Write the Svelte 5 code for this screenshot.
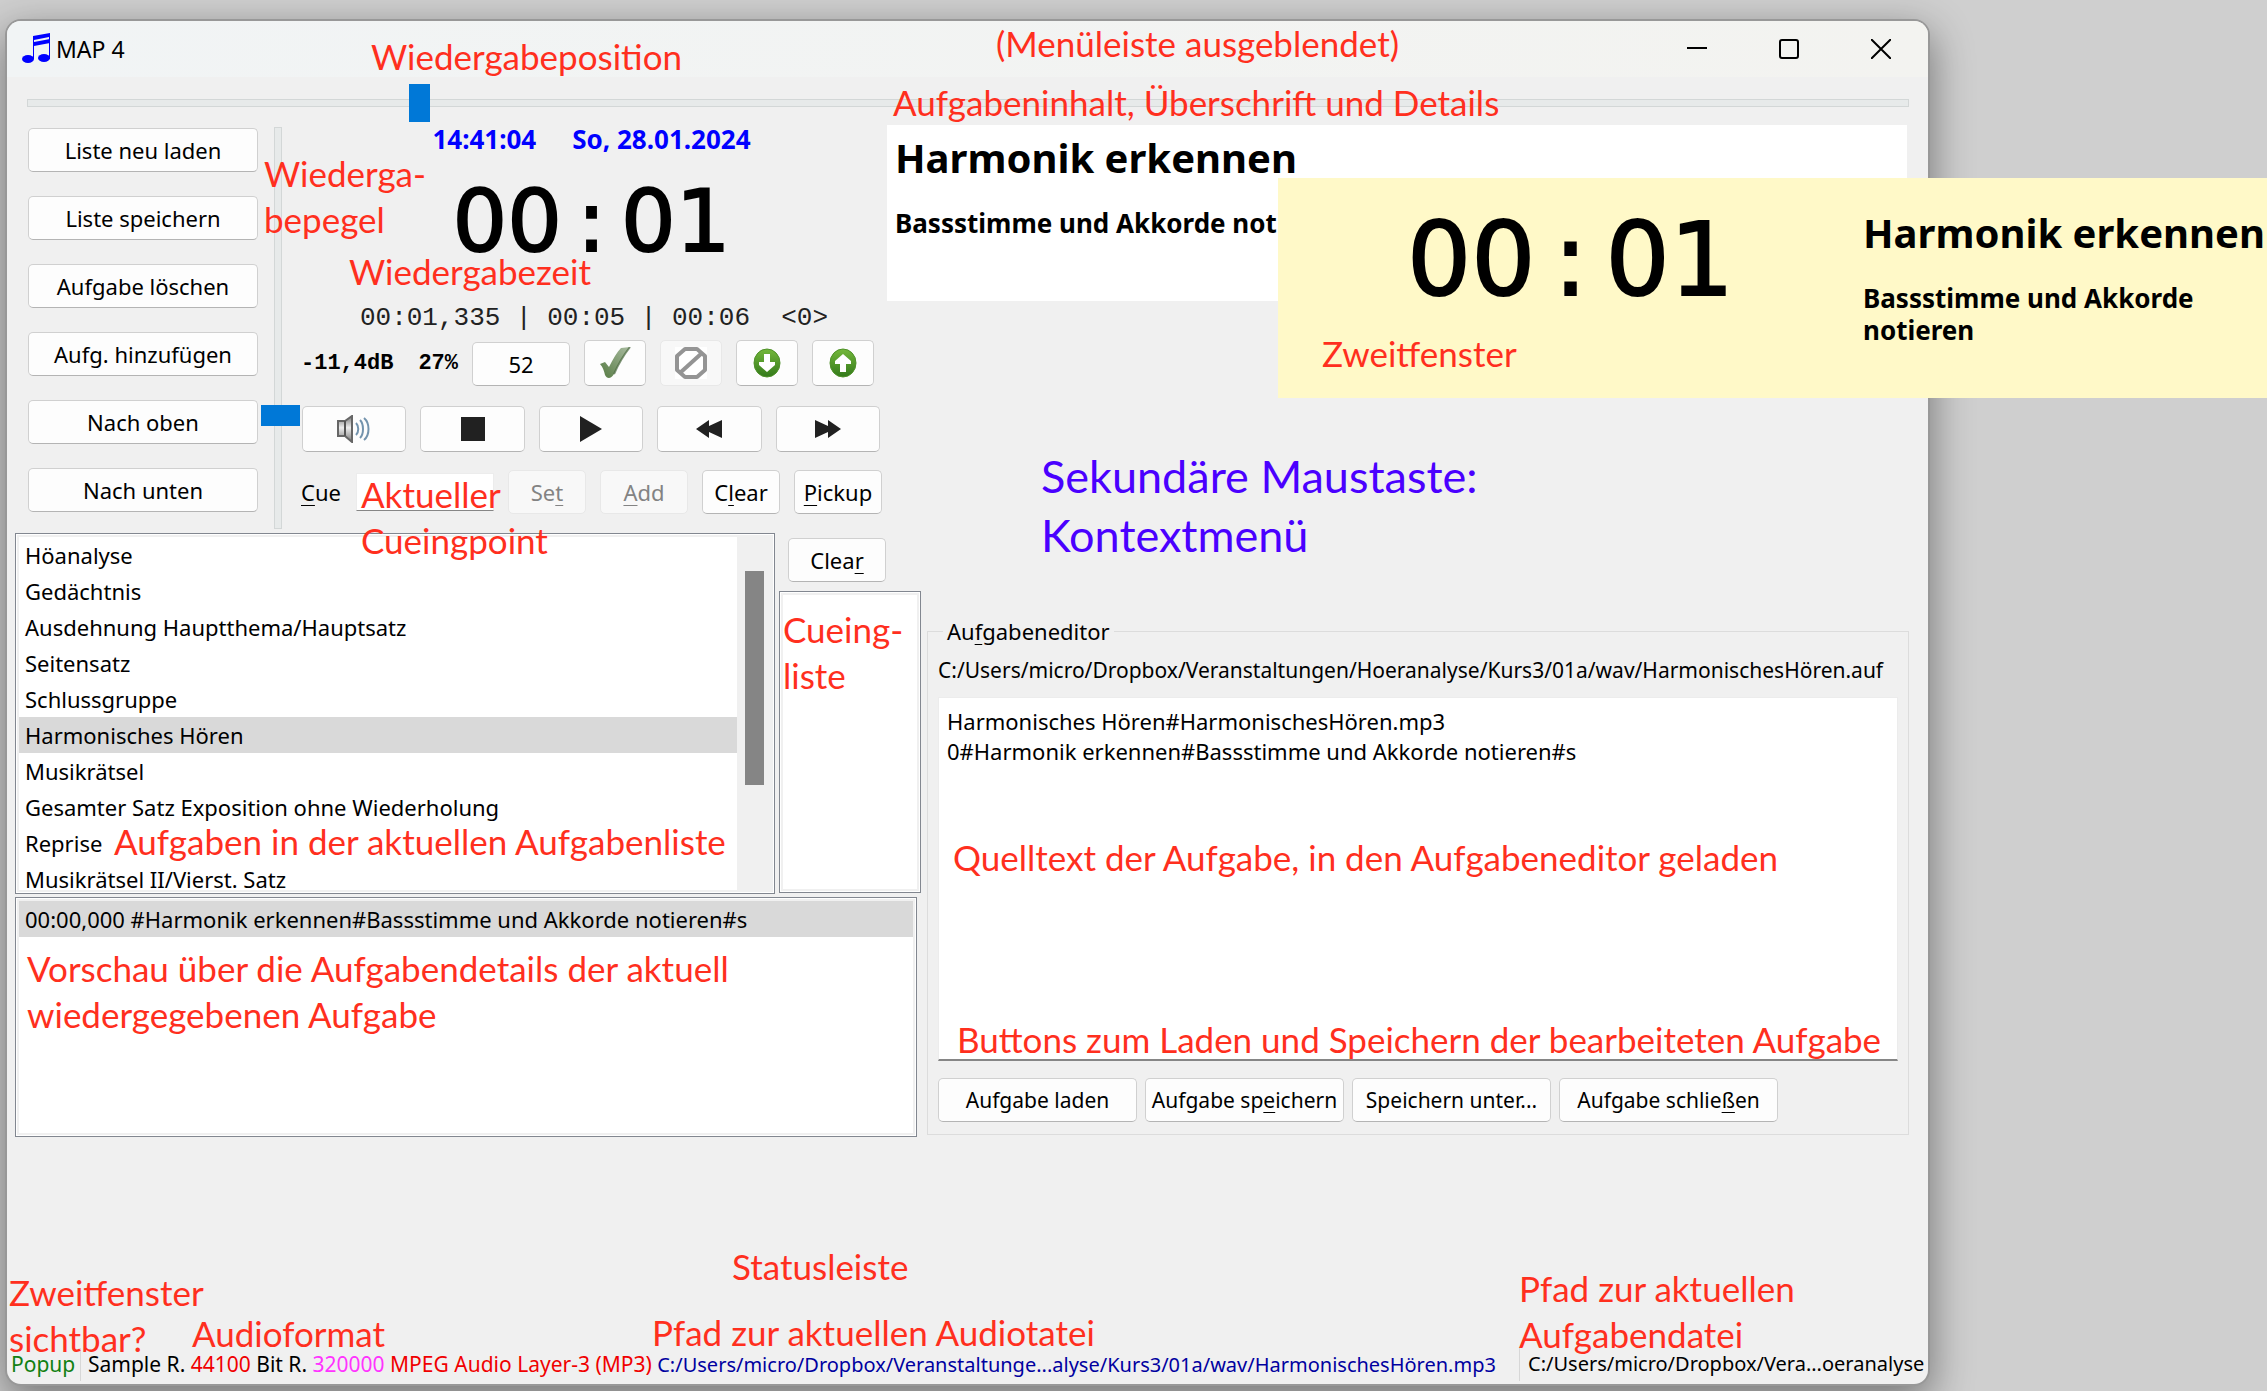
<script>
  const listButtons = [
    'Liste neu laden',
    'Liste speichern',
    'Aufgabe löschen',
    'Aufg. hinzufügen',
    'Nach oben',
    'Nach unten'
  ];

  const tasks = [
    'Höanalyse',
    'Gedächtnis',
    'Ausdehnung Hauptthema/Hauptsatz',
    'Seitensatz',
    'Schlussgruppe',
    'Harmonisches Hören',
    'Musikrätsel',
    'Gesamter Satz Exposition ohne Wiederholung',
    'Reprise',
    'Musikrätsel II/Vierst. Satz'
  ];

  let selected = $state(5);
  let position = $state(205);
  let volume = $state(27);
  let cue = $state('');
  let source = $state(
    'Harmonisches Hören#HarmonischesHören.mp3\n0#Harmonik erkennen#Bassstimme und Akkorde notieren#s'
  );

  const notes = [
    { name: 'n-position', lines: ['Wiedergabeposition'] },
    { name: 'n-menu', lines: ['(Menüleiste ausgeblendet)'] },
    { name: 'n-content', lines: ['Aufgabeninhalt, Überschrift und Details'] },
    { name: 'n-level', lines: ['Wiederga-', 'bepegel'] },
    { name: 'n-time', lines: ['Wiedergabezeit'] },
    { name: 'n-second', lines: ['Zweitfenster'] },
    { name: 'n-context', lines: ['Sekundäre Maustaste:', 'Kontextmenü'] },
    { name: 'n-cuepoint', lines: ['Aktueller', 'Cueingpoint'] },
    { name: 'n-cuelist', lines: ['Cueing-', 'liste'] },
    { name: 'n-tasks', lines: ['Aufgaben in der aktuellen Aufgabenliste'] },
    { name: 'n-preview', lines: ['Vorschau über die Aufgabendetails der aktuell', 'wiedergegebenen Aufgabe'] },
    { name: 'n-source', lines: ['Quelltext der Aufgabe, in den Aufgabeneditor geladen'] },
    { name: 'n-buttons', lines: ['Buttons zum Laden und Speichern der bearbeiteten Aufgabe'] },
    { name: 'n-visible', lines: ['Zweitfenster', 'sichtbar?'] },
    { name: 'n-format', lines: ['Audioformat'] },
    { name: 'n-status', lines: ['Statusleiste'] },
    { name: 'n-audiopath', lines: ['Pfad zur aktuellen Audiotatei'] },
    { name: 'n-taskpath', lines: ['Pfad zur aktuellen', 'Aufgabendatei'] }
  ];
</script>

<div class="desktop">
  <main class="window">
    <header class="titlebar">
      <svg class="logo" width="28" height="30" viewBox="0 0 28 30" aria-hidden="true">
        <g fill="#0000ff">
          <ellipse cx="6" cy="26" rx="6" ry="4" />
          <ellipse cx="22" cy="25" rx="6" ry="4" />
          <path d="M11 3 L28 0 V26 H27 V4 L12 7 V26 H11 Z" />
          <path d="M12 9 L28 6 V10 L12 13 Z" />
        </g>
      </svg>
      <h1>MAP 4</h1>
      <div class="winctl">
        <button aria-label="Minimieren">
          <svg width="20" height="20" viewBox="0 0 20 20"><path d="M0 9H20" stroke="#000" stroke-width="2" /></svg>
        </button>
        <button aria-label="Maximieren">
          <svg width="20" height="20" viewBox="0 0 20 20"><rect x="1" y="1" width="18" height="18" rx="2" fill="none" stroke="#000" stroke-width="2" /></svg>
        </button>
        <button aria-label="Schließen">
          <svg width="20" height="20" viewBox="0 0 20 20"><path d="M0 0L20 20M20 0L0 20" stroke="#000" stroke-width="2" /></svg>
        </button>
      </div>
    </header>

    <div class="seekrow">
      <input class="seek" type="range" min="0" max="1000" bind:value={position} aria-label="Wiedergabeposition" />
    </div>

    <section class="top">
      <div class="listbuttons">
        {#each listButtons as label}
          <button class="btn">{label}</button>
        {/each}
      </div>
      <input class="volume" type="range" min="0" max="100" bind:value={volume} aria-label="Wiedergabepegel" />
      <div class="controls">
        <div class="clock"><span>14:41:04</span><span>So, 28.01.2024</span></div>
        <div class="time">00<span class="colon">:</span>01</div>
        <div class="times">00:01,335 | 00:05 | 00:06&nbsp; &lt;0&gt;</div>
        <div class="row levels">
          <span class="db">-11,4dB</span>
          <span class="pct">27%</span>
          <button class="btn num">52</button>
          <button class="btn ico" aria-label="Übernehmen">
            <svg width="32" height="32" viewBox="0 0 32 32">
              <defs>
                <linearGradient id="chk" x1="1" y1="0" x2="0" y2="1">
                  <stop offset="0" stop-color="#a9bba0" />
                  <stop offset="1" stop-color="#557a42" />
                </linearGradient>
              </defs>
              <path d="M1 17 L6 15 L10 20 C14 12 18 5 22 1 L31 0 C24 9 19 18 15 27 C12 32 8 32 6 28 C5 24 4 20 1 17 Z" fill="url(#chk)" />
              <path d="M15 27 C19 18 24 9 31 0" fill="none" stroke="#4b6940" stroke-width="2" opacity=".7" />
            </svg>
          </button>
          <button class="btn ico" disabled aria-label="Kein">
            <svg width="32" height="32" viewBox="0 0 32 32">
              <rect width="32" height="32" fill="#fff" />
              <path d="M10 2H22L30 9V23L22 30H10L2 23V9Z" fill="none" stroke="#949494" stroke-width="4" stroke-linejoin="round" />
              <path d="M6 25L27 6" stroke="#949494" stroke-width="4" />
            </svg>
          </button>
          <button class="btn ico" aria-label="Abwärts">
            <svg width="28" height="30" viewBox="0 0 28 30">
              <defs>
                <linearGradient id="grn" x1="0" y1="0" x2="0" y2="1">
                  <stop offset="0" stop-color="#74b83a" />
                  <stop offset="1" stop-color="#33791b" />
                </linearGradient>
              </defs>
              <ellipse cx="14" cy="15" rx="13" ry="14" fill="url(#grn)" stroke="#4f9129" />
              <path d="M11 6H17V14H22V17L14 24L6 17V14H11Z" fill="#fff" />
            </svg>
          </button>
          <button class="btn ico" aria-label="Aufwärts">
            <svg width="28" height="30" viewBox="0 0 28 30">
              <ellipse cx="14" cy="15" rx="13" ry="14" fill="url(#grn)" stroke="#4f9129" />
              <path d="M11 24H17V16H22V13L14 6L6 13V16H11Z" fill="#fff" />
            </svg>
          </button>
        </div>
        <div class="transport">
          <button class="btn ico" aria-label="Ton">
            <svg width="34" height="28" viewBox="0 0 34 28">
              <defs>
                <linearGradient id="spk" x1="0" y1="0" x2="0" y2="1">
                  <stop offset="0" stop-color="#777" />
                  <stop offset=".45" stop-color="#eee" />
                  <stop offset="1" stop-color="#777" />
                </linearGradient>
              </defs>
              <path d="M1 6H8L15 1V27L8 21H1Z" fill="url(#spk)" stroke="#666" stroke-width="2" />
              <path d="M8 6V21" stroke="#555" stroke-width="2" />
              <g fill="none" stroke="#7393ad" stroke-width="2">
                <path d="M19 8C22 11 22 17 19 20" />
                <path d="M23 5C27 9 27 19 23 23" />
                <path d="M27 3C33 8 33 20 27 25" />
              </g>
            </svg>
          </button>
          <button class="btn ico" aria-label="Stopp">
            <svg width="24" height="24" viewBox="0 0 24 24"><rect width="24" height="24" fill="#212121" /></svg>
          </button>
          <button class="btn ico" aria-label="Wiedergabe">
            <svg width="22" height="26" viewBox="0 0 22 26"><path d="M0 0L22 13L0 26Z" fill="#212121" /></svg>
          </button>
          <button class="btn ico" aria-label="Zurück">
            <svg width="26" height="18" viewBox="0 0 26 18"><path d="M0 9L13 0V6L26 0V18L13 12V18Z" fill="#212121" /></svg>
          </button>
          <button class="btn ico" aria-label="Vor">
            <svg width="26" height="18" viewBox="0 0 26 18"><path d="M26 9L13 0V6L0 0V18L13 12V18Z" fill="#212121" /></svg>
          </button>
        </div>
        <div class="row cuerow">
          <label for="cue"><u>C</u>ue</label>
          <input id="cue" type="text" bind:value={cue} />
          <button class="btn narrow" disabled>Se<u>t</u></button>
          <button class="btn wide" disabled><u>A</u>dd</button>
          <button class="btn narrow">C<u>l</u>ear</button>
          <button class="btn wide"><u>P</u>ickup</button>
        </div>
      </div>
      <article class="content">
        <h2>Harmonik erkennen</h2>
        <p>Bassstimme und Akkorde notieren</p>
      </article>
    </section>

    <section class="bottom">
      <div class="lists">
        <div class="listrow">
          <div class="frame tasklist">
            <ul>
              {#each tasks as task, i}
                <li><button class:sel={i === selected} onclick={() => (selected = i)}>{task}</button></li>
              {/each}
            </ul>
            <div class="bar"><div class="thumb"></div></div>
          </div>
          <div class="cues">
            <button class="btn clear">Clea<u>r</u></button>
            <div class="frame cuelist"></div>
          </div>
        </div>
        <div class="frame details">
          <ul>
            <li><button class="sel">00:00,000 #Harmonik erkennen#Bassstimme und Akkorde notieren#s</button></li>
          </ul>
        </div>
      </div>
      <fieldset class="editor">
        <legend>Au<u>f</u>gabeneditor</legend>
        <p class="path">C:/Users/micro/Dropbox/Veranstaltungen/Hoeranalyse/Kurs3/01a/wav/HarmonischesHören.auf</p>
        <textarea bind:value={source} aria-label="Quelltext der Aufgabe" spellcheck="false"></textarea>
        <div class="actions">
          <button class="btn">Aufgabe laden</button>
          <button class="btn">Aufgabe sp<u>e</u>ichern</button>
          <button class="btn">Speichern unter...</button>
          <button class="btn last">Aufgabe schlie<u>ß</u>en</button>
        </div>
      </fieldset>
    </section>

    <footer class="statusbar">
      <span class="popup">Popup</span>
      <span class="audio">
        Sample R. <span class="red">44100</span> Bit R. <span class="pink">320000</span>
        <span class="red">MPEG Audio Layer-3 (MP3)</span>
        <span class="navy">C:/Users/micro/Dropbox/Veranstaltunge...alyse/Kurs3/01a/wav/HarmonischesHören.mp3</span>
      </span>
      <span class="file">C:/Users/micro/Dropbox/Vera...oeranalyse</span>
    </footer>
  </main>

  <aside class="popupwin">
    <div class="bigtime">00<span class="colon">:</span>01</div>
    <div class="popuptext">
      <h2>Harmonik erkennen</h2>
      <p>Bassstimme und Akkorde notieren</p>
    </div>
  </aside>

  {#each notes as note}
    <div class="note {note.name}">
      {#each note.lines as line}<div>{line}</div>{/each}
    </div>
  {/each}
</div>

<style>
  :global(body) {
    margin: 0;
    background: #cfcfcf;
  }
  .desktop {
    position: relative;
    min-height: 100vh;
    overflow: hidden;
    background: #cfcfcf;
    color: #000;
    font-family: 'Noto Sans', 'Open Sans', sans-serif;
    font-size: 22px;
  }
  h1,
  h2,
  p,
  ul,
  fieldset,
  legend {
    margin: 0;
    padding: 0;
  }
  button,
  input,
  textarea {
    font: inherit;
    color: inherit;
    margin: 0;
    box-sizing: border-box;
  }
  .window {
    position: absolute;
    left: 7px;
    top: 21px;
    right: 339px;
    bottom: 7px;
    display: flex;
    flex-direction: column;
    overflow: hidden;
    border-radius: 14px;
    background: #f0f0f0;
    box-shadow:
      0 0 0 2px #989898,
      0 14px 40px 4px rgba(0, 0, 0, 0.42);
  }

  .titlebar {
    display: flex;
    align-items: center;
    height: 56px;
    padding-left: 15px;
    gap: 6px;
    background: linear-gradient(90deg, #f1f4f5, #f3f3f0);
  }
  .logo {
    margin-bottom: 2px;
  }
  .titlebar h1 {
    flex: 1;
    font-size: 23px;
    font-weight: 400;
  }
  .winctl {
    display: flex;
    padding-right: 1px;
  }
  .winctl button {
    display: grid;
    place-items: center;
    width: 92px;
    height: 54px;
    padding: 0;
    border: 0;
    background: none;
  }

  .seekrow {
    padding: 7px 19px 3px 20px;
  }
  .seek {
    display: block;
    width: 100%;
    height: 38px;
    appearance: none;
    background: none;
  }
  .seek::-webkit-slider-runnable-track {
    height: 8px;
    box-sizing: border-box;
    border: 1px solid #d3d7d7;
    background: #e7eaea;
  }
  .seek::-webkit-slider-thumb {
    appearance: none;
    width: 21px;
    height: 38px;
    margin-top: -16px;
    border-radius: 0;
    background: #0078d7;
  }

  .top {
    display: flex;
    align-items: flex-start;
    padding: 0 21px 0 21px;
  }
  .listbuttons {
    display: flex;
    flex-direction: column;
    gap: 24px;
    width: 230px;
    padding-top: 3px;
  }
  .btn {
    height: 44px;
    padding: 0;
    border: 1px solid #d0d0d0;
    border-bottom-color: #b4b4b4;
    border-radius: 5px;
    background: #fdfdfd;
    text-align: center;
  }
  .btn:disabled {
    border-color: #e8e8e8;
    background: #f8f8f8;
    color: #838383;
  }
  .btn svg {
    display: block;
    margin: auto;
  }
  u {
    text-underline-offset: 4px;
    text-decoration-thickness: 1px;
  }
  .volume {
    writing-mode: vertical-lr;
    direction: rtl;
    width: 39px;
    height: 402px;
    margin: 2px 2px 0 0;
    appearance: none;
    background: none;
  }
  .volume::-webkit-slider-runnable-track {
    width: 8px;
    box-sizing: border-box;
    border: 1px solid #d3d7d7;
    background: #e7eaea;
  }
  .volume::-webkit-slider-thumb {
    appearance: none;
    width: 39px;
    height: 21px;
    margin-left: -14px;
    border-radius: 0;
    background: #0078d7;
  }
  .controls {
    width: 581px;
    margin-left: 2px;
  }
  .clock {
    display: flex;
    justify-content: center;
    gap: 36px;
    line-height: 28px;
    font-size: 26px;
    font-weight: 700;
    color: #0000ff;
  }
  .time,
  .bigtime {
    font-family: 'DejaVu Sans', sans-serif;
    text-align: center;
    white-space: nowrap;
    -webkit-text-stroke: 2px #000;
  }
  .time {
    margin-top: 18px;
    font-size: 86px;
    line-height: 100px;
  }
  .colon {
    padding: 0 15px;
  }
  .times {
    margin-top: 33px;
    padding-left: 5px;
    font-family: 'Liberation Mono', monospace;
    font-size: 26px;
    line-height: 28px;
    text-align: center;
    white-space: pre;
    color: #222;
  }
  .row {
    display: flex;
    align-items: center;
    gap: 14px;
  }
  .levels {
    margin-top: 8px;
    height: 46px;
    font-family: 'Liberation Mono', monospace;
    font-size: 22px;
  }
  .db {
    margin-right: 11px;
  }
  .db,
  .pct {
    font-weight: 700;
  }
  .levels .num {
    width: 98px;
    font-family: 'Noto Sans', sans-serif;
    align-self: flex-end;
  }
  .ico {
    width: 62px;
    height: 46px;
  }
  .transport {
    display: grid;
    grid-template-columns: repeat(5, 1fr);
    gap: 14px;
    margin: 20px 2px 0 1px;
  }
  .transport .ico {
    width: auto;
  }
  .cuerow {
    margin-top: 18px;
  }
  .cuerow label {
    width: 41px;
  }
  .cuerow input {
    width: 138px;
    height: 38px;
    border: 1px solid #ececec;
    border-bottom: 1px solid #868686;
    background: #fff;
  }
  .narrow {
    width: 78px;
  }
  .wide {
    width: 88px;
  }
  .content {
    flex: 1;
    min-width: 0;
    height: 176px;
    margin-left: 5px;
    padding: 8px 8px 0;
    box-sizing: border-box;
    background: #fff;
  }
  h2 {
    font-size: 40px;
    line-height: 50px;
    font-weight: 700;
    white-space: nowrap;
  }
  .content p,
  .popuptext p {
    margin-top: 24px;
    font-size: 26px;
    font-weight: 700;
    line-height: 32px;
  }

  .bottom {
    display: flex;
    align-items: flex-start;
    margin-top: 4px;
    padding: 0 19px 0 8px;
  }
  .lists {
    width: 906px;
  }
  .listrow {
    display: flex;
    gap: 4px;
  }
  .frame {
    box-sizing: border-box;
    border: 1px solid #828790;
    background: #fff;
    box-shadow:
      inset 0 0 0 1px #fff,
      inset 0 0 0 3px #f0f0f0;
    padding: 3px;
  }
  .tasklist {
    display: flex;
    width: 760px;
    height: 361px;
    overflow: hidden;
  }
  .frame ul {
    flex: 1;
    overflow: hidden;
    list-style: none;
  }
  .frame li button {
    display: block;
    width: 100%;
    height: 36px;
    padding: 0 0 0 6px;
    border: 0;
    background: none;
    text-align: left;
    line-height: 36px;
    white-space: nowrap;
  }
  .frame li .sel {
    background: #d9d9d9;
  }
  .bar {
    width: 34px;
    padding: 34px 7px 0 8px;
    box-sizing: border-box;
    background: #f0f0f0;
  }
  .thumb {
    height: 214px;
    background: #858585;
  }
  .cues {
    display: flex;
    flex-direction: column;
    width: 142px;
    padding-top: 5px;
    box-sizing: border-box;
  }
  .clear {
    width: 98px;
    margin-left: 9px;
  }
  .cuelist {
    height: 302px;
    margin-top: 9px;
  }
  .details {
    width: 902px;
    height: 240px;
    margin-top: 3px;
  }
  .editor {
    flex: 1;
    min-width: 0;
    display: flex;
    flex-direction: column;
    margin: 82px 0 0 6px;
    padding: 0 10px 12px;
    border: 1px solid #dcdcdc;
  }
  .editor legend {
    margin-left: 5px;
    padding: 0 4px;
    line-height: 32px;
  }
  .path {
    margin-top: 7px;
    font-size: 21px;
    line-height: 32px;
    white-space: nowrap;
  }
  .editor textarea {
    display: block;
    width: 100%;
    height: 364px;
    margin-top: 11px;
    padding: 8px;
    border: 1px solid #ececec;
    border-bottom: 2px solid #868686;
    background: #fff;
    line-height: 30px;
    resize: none;
    outline: 0;
  }
  .actions {
    display: flex;
    gap: 8px;
    margin-top: 17px;
  }
  .actions .btn {
    width: 199px;
    font-size: 21px;
  }
  .actions .last {
    width: 219px;
  }

  .statusbar {
    display: flex;
    align-items: stretch;
    margin-top: auto;
    padding-bottom: 3px;
    line-height: 32px;
    white-space: nowrap;
    font-size: 21px;
  }
  .popup {
    width: 74px;
    padding-left: 4px;
    box-sizing: border-box;
    color: #128012;
    border-right: 1px solid #d7d7d7;
  }
  .audio {
    width: 1439px;
    padding-left: 7px;
    box-sizing: border-box;
    border-right: 1px solid #d7d7d7;
  }
  .file {
    padding-left: 8px;
  }
  .navy,
  .file {
    font-size: 20px;
  }
  .red {
    color: #f00000;
  }
  .pink {
    color: #ff33ff;
  }
  .navy {
    color: #0000a0;
  }

  .popupwin {
    position: absolute;
    left: 1278px;
    right: 0;
    top: 178px;
    height: 220px;
    display: flex;
    background: #fff9c8;
  }
  .bigtime {
    width: 585px;
    padding-top: 24px;
    font-size: 101px;
    line-height: 116px;
  }
  .bigtime .colon {
    padding: 0 18px;
  }
  .popuptext {
    flex: 1;
    min-width: 0;
    padding-top: 30px;
  }
  .popuptext p {
    padding-right: 30px;
  }

  .note {
    position: absolute;
    font-family: Lato, sans-serif;
    font-size: 35px;
    line-height: 46px;
    white-space: nowrap;
    color: #ff2f1e;
    pointer-events: none;
  }
  .n-position { left: 371px; top: 33px; }
  .n-menu { left: 996px; top: 20px; }
  .n-content { left: 893px; top: 79px; }
  .n-level { left: 264px; top: 150px; }
  .n-time { left: 349px; top: 248px; }
  .n-second { left: 1322px; top: 330px; }
  .n-context {
    left: 1041px;
    top: 447px;
    font-size: 45px;
    line-height: 59px;
    color: #4a00ff;
  }
  .n-cuepoint { left: 361px; top: 471px; }
  .n-cuelist { left: 783px; top: 606px; }
  .n-tasks { left: 114px; top: 818px; }
  .n-preview { left: 27px; top: 945px; }
  .n-source { left: 953px; top: 834px; }
  .n-buttons { left: 957px; top: 1016px; }
  .n-visible { left: 9px; top: 1269px; }
  .n-format { left: 192px; top: 1310px; }
  .n-status { left: 732px; top: 1243px; }
  .n-audiopath { left: 652px; top: 1309px; }
  .n-taskpath { left: 1519px; top: 1265px; }
</style>
